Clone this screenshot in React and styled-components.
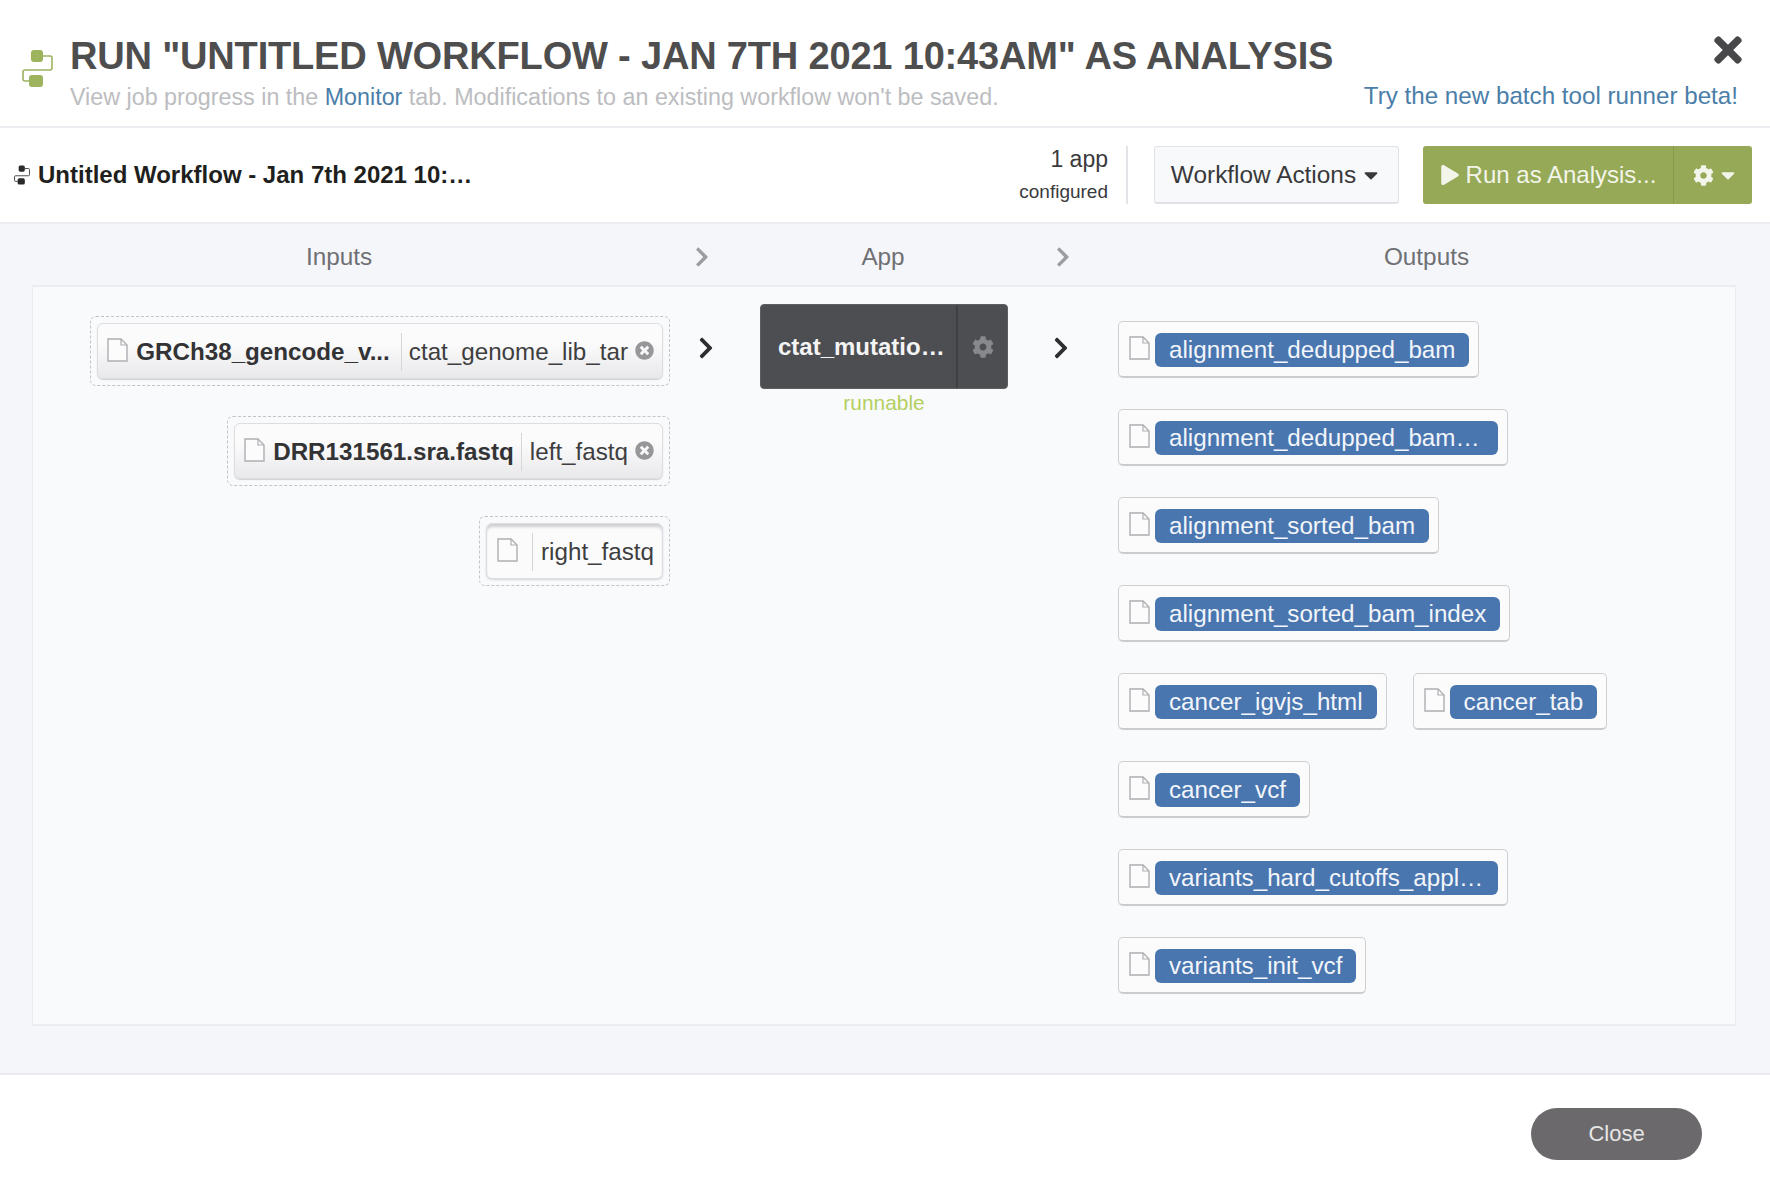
import React from 'react';
import styled, { createGlobalStyle } from 'styled-components';
import { FaCaretDown, FaChevronRight, FaCog, FaPlay, FaTimes, FaTimesCircle } from 'react-icons/fa';

const GlobalStyle = createGlobalStyle`
    html, body {
        margin: 0;
        padding: 0;
        background: #fff;
    }
    * {
        box-sizing: border-box;
    }
    body {
        font-family: "Liberation Sans", Arial, sans-serif;
    }
`;

const COLUMNS = '637px 90px 248px 110px 1fr';

const Styled = {
    Page: styled.div`
        width: 1770px;
        height: 1188px;
        display: flex;
        flex-direction: column;
        overflow: hidden;
        background: #fff;
    `,
    Header: styled.header`
        height: 128px;
        flex: none;
        display: flex;
        padding: 0 22px 0 22px;
        border-bottom: 2px solid #ecedf0;
    `,
    LogoWrap: styled.div`
        width: 48px;
        padding-top: 50px;
        flex: none;
    `,
    HeaderText: styled.div`
        flex: 1;
        padding-top: 36px;
    `,
    Title: styled.h1`
        margin: 0;
        font-size: 38.05px;
        line-height: 40px;
        font-weight: 700;
        color: #4e4e4f;
        letter-spacing: -0.2px;
        white-space: nowrap;
    `,
    Subtitle: styled.p`
        margin: 8px 0 0;
        font-size: 23.3px;
        line-height: 26px;
        color: #bcbdc0;
        white-space: nowrap;
    `,
    Link: styled.a`
        color: #4a7ea8;
        text-decoration: none;
    `,
    HeaderSide: styled.div`
        display: flex;
        flex-direction: column;
        align-items: flex-end;
        justify-content: space-between;
        padding: 30px 0 17px;
        color: #48484a;
        font-size: 40px;
        line-height: 0;
    `,
    BetaLink: styled.a`
        margin-right: 10px;
        color: #4a7ea8;
        font-size: 24.2px;
        line-height: 26px;
        text-decoration: none;
        white-space: nowrap;
    `,
    Toolbar: styled.div`
        height: 96px;
        flex: none;
        display: flex;
        align-items: center;
        padding: 0 18px 0 14px;
        border-bottom: 2px solid #ecedf0;
    `,
    WorkflowName: styled.div`
        flex: 1;
        display: flex;
        align-items: center;
        gap: 8px;
        font-size: 24px;
        font-weight: 700;
        color: #1f1f20;
    `,
    AppCount: styled.div`
        text-align: right;
        color: #3a3a3c;
        padding-right: 18px;
        border-right: 2px solid #e3e4e7;
        height: 58px;
        margin-right: 26px;
    `,
    CountLine: styled.div`
        font-size: ${p => p.$small ? '19px' : '23px'};
        line-height: ${p => p.$small ? '22px' : '26px'};
        margin-top: ${p => p.$small ? '9px' : '0'};
    `,
    ActionsButton: styled.button`
        width: 245px;
        height: 58px;
        display: flex;
        align-items: center;
        justify-content: center;
        gap: 4px;
        padding: 0;
        font: 24.4px "Liberation Sans", Arial, sans-serif;
        color: #39393b;
        background: #f8f9fb;
        border: 1px solid #e1e2e6;
        border-bottom-width: 2px;
        border-radius: 3px;
    `,
    RunGroup: styled.div`
        display: flex;
        margin-left: 24px;
        height: 58px;
        background: #95a957;
        border-radius: 3px;
        color: #f3f5ea;
    `,
    RunButton: styled.div`
        width: 251px;
        display: flex;
        align-items: center;
        justify-content: center;
        gap: 6px;
        font-size: 24px;
        border-right: 1px solid #87994d;
        white-space: nowrap;
    `,
    RunMenu: styled.div`
        width: 78px;
        display: flex;
        align-items: center;
        justify-content: center;
        gap: 3px;
        padding-left: 6px;
        font-size: 21px;
    `,
    Body: styled.main`
        height: 851px;
        flex: none;
        display: flex;
        flex-direction: column;
        padding: 0 34px 0 32px;
        background: #f5f6fa;
        border-bottom: 2px solid #e9eaed;
    `,
    ColumnHeads: styled.div`
        height: 61px;
        flex: none;
        display: grid;
        grid-template-columns: ${COLUMNS};
        align-items: center;
        font-size: 24.3px;
        color: #6f7073;
    `,
    ColumnHead: styled.div`
        text-align: center;
        padding-right: ${p => p.$inset || 0}px;
        margin-top: 5px;
    `,
    HeadChevron: styled.div`
        display: flex;
        margin-top: 5px;
        padding-left: ${p => p.$offset}px;
        color: #9c9da0;
        font-size: 22px;
    `,
    Panel: styled.section`
        height: 741px;
        display: grid;
        grid-template-columns: ${COLUMNS};
        align-items: start;
        background: #f9fafc;
        border: 2px solid #ebecef;
        border-left-width: 1px;
        border-right-width: 1px;
    `,
    Inputs: styled.div`
        display: flex;
        flex-direction: column;
        align-items: flex-end;
        gap: 30px;
        padding-top: 29px;
    `,
    DropZone: styled.div`
        height: 70px;
        padding: 6px;
        border: 1px dashed #c3c4c8;
        border-radius: 6px;
    `,
    InputTile: styled.div`
        height: 100%;
        display: flex;
        align-items: center;
        padding: 2px 8px 0 ${p => p.$empty ? '10px' : '9px'};
        font-size: 24.2px;
        color: #3e3e40;
        border: 1px solid #dcdde0;
        border-radius: 6px;
        background: ${p => p.$empty ? '#fbfbfc' : 'linear-gradient(#fbfbfc 35%, #e9e9eb)'};
        box-shadow: ${p => p.$empty ? 'inset 0 4px 3px -1px #cfcfd2, 0 1px 2px #d6d6d9' : '0 1px 1px #d0d0d3'};
    `,
    InputName: styled.span`
        font-weight: 700;
        margin-left: 8px;
        color: #333335;
        white-space: nowrap;
    `,
    InputLabel: styled.span`
        display: flex;
        align-items: center;
        height: 38px;
        margin-left: ${p => p.$gap}px;
        padding-left: ${p => p.$pad}px;
        border-left: 1px solid #d6d6d9;
        white-space: nowrap;
    `,
    RemoveIcon: styled.span`
        display: flex;
        margin: -4px 0 0 7px;
        color: #97979a;
        font-size: 19px;
    `,
    ArrowCell: styled.div`
        display: flex;
        padding: 49px 0 0 ${p => p.$offset}px;
        color: #2e2e30;
        font-size: 24px;
    `,
    AppCell: styled.div`
        padding-top: 17px;
        text-align: center;
    `,
    AppCard: styled.div`
        height: 85px;
        display: flex;
        background: #4d4e52;
        border: 1px solid #5d5e62;
        border-radius: 4px;
        color: #f4f4f4;
    `,
    AppName: styled.div`
        flex: 1;
        display: flex;
        align-items: center;
        padding-left: 17px;
        font-size: 24px;
        font-weight: 700;
        white-space: nowrap;
        border-right: 2px solid #3f4043;
    `,
    AppGear: styled.div`
        width: 49px;
        display: flex;
        align-items: center;
        justify-content: center;
        color: #88898c;
        font-size: 22px;
    `,
    AppStatus: styled.div`
        margin-top: 1px;
        font-size: 20.9px;
        line-height: 26px;
        color: #b3d05f;
    `,
    Outputs: styled.div`
        display: flex;
        flex-direction: column;
        gap: 31px;
        padding-top: 34px;
    `,
    OutputRow: styled.div`
        display: flex;
        gap: 26px;
    `,
    OutputTile: styled.div`
        height: 57px;
        width: ${p => p.$truncated ? '390px' : 'auto'};
        display: flex;
        align-items: center;
        gap: 5px;
        padding: 2px 9px 0 10px;
        background: #fbfbfc;
        border: 1px solid #cfd0d3;
        border-bottom: 2px solid #cbccce;
        border-radius: 5px;
    `,
    Pill: styled.span`
        flex: 1;
        height: 34px;
        display: flex;
        align-items: center;
        padding: 0 14px;
        font-size: 24.2px;
        color: #f2f5f9;
        background: #4a76b0;
        border-radius: 6px;
        white-space: nowrap;
    `,
    Footer: styled.footer`
        flex: 1;
        display: flex;
        justify-content: flex-end;
        padding: 33px 68px 0 0;
    `,
    CloseButton: styled.button`
        width: 171px;
        height: 52px;
        padding: 0;
        font: 22px "Liberation Sans", Arial, sans-serif;
        color: #e6e6e6;
        background: #6b696b;
        border: 0;
        border-radius: 26px;
    `,
};

const WorkflowIcon = ({ width, height, fill }) => (
    <svg width={width} height={height} viewBox="0 0 31 37" fill="none" style={{ display: 'block' }}>
        <rect x="9" y="0" width="12" height="12" rx="3" fill={fill} />
        <rect x="7" y="25" width="14" height="12" rx="3" fill={fill} />
        <path d="M21 6 H28 a2 2 0 0 1 2 2 V18 a2 2 0 0 1 -2 2 H3 a2 2 0 0 0 -2 2 V29 a2 2 0 0 0 2 2 H7" stroke={fill} strokeWidth="1.6" />
    </svg>
);

const FileIcon = () => (
    <svg width="21" height="24" viewBox="0 0 21 24" fill="none" style={{ flex: 'none', display: 'block', marginTop: '-5px' }}>
        <path d="M1 1 H14 L20 7 V23 H1 Z" stroke="#adaeb1" strokeWidth="1.4" fill="#fcfcfd" />
        <path d="M14 1 V7 H20" stroke="#adaeb1" strokeWidth="1.2" />
    </svg>
);

const inputs = [
    { name: 'GRCh38_gencode_v...', label: 'ctat_genome_lib_tar', gap: 11, pad: 7 },
    { name: 'DRR131561.sra.fastq', label: 'left_fastq', gap: 7, pad: 8 },
    { label: 'right_fastq', gap: 14, pad: 8 },
];

const outputs = [
    ['alignment_dedupped_bam'],
    ['alignment_dedupped_bam…'],
    ['alignment_sorted_bam'],
    ['alignment_sorted_bam_index'],
    ['cancer_igvjs_html', 'cancer_tab'],
    ['cancer_vcf'],
    ['variants_hard_cutoffs_appl…'],
    ['variants_init_vcf'],
];

export default function App() {
    return (
        <Styled.Page>
            <GlobalStyle />

            <Styled.Header>
                <Styled.LogoWrap>
                    <WorkflowIcon width={31} height={37} fill="#9db35d" />
                </Styled.LogoWrap>
                <Styled.HeaderText>
                    <Styled.Title>RUN "UNTITLED WORKFLOW - JAN 7TH 2021 10:43AM" AS ANALYSIS</Styled.Title>
                    <Styled.Subtitle>
                        View job progress in the <Styled.Link>Monitor</Styled.Link> tab. Modifications to an existing workflow won't be saved.
                    </Styled.Subtitle>
                </Styled.HeaderText>
                <Styled.HeaderSide>
                    <FaTimes />
                    <Styled.BetaLink>Try the new batch tool runner beta!</Styled.BetaLink>
                </Styled.HeaderSide>
            </Styled.Header>

            <Styled.Toolbar>
                <Styled.WorkflowName>
                    <WorkflowIcon width={16} height={20} fill="#2a2a2c" />
                    Untitled Workflow - Jan 7th 2021 10:…
                </Styled.WorkflowName>
                <Styled.AppCount>
                    <Styled.CountLine>1 app</Styled.CountLine>
                    <Styled.CountLine $small>configured</Styled.CountLine>
                </Styled.AppCount>
                <Styled.ActionsButton>
                    Workflow Actions <FaCaretDown size={22} />
                </Styled.ActionsButton>
                <Styled.RunGroup>
                    <Styled.RunButton>
                        <FaPlay size={20} /> Run as Analysis...
                    </Styled.RunButton>
                    <Styled.RunMenu>
                        <FaCog />
                        <FaCaretDown size={22} />
                    </Styled.RunMenu>
                </Styled.RunGroup>
            </Styled.Toolbar>

            <Styled.Body>
                <Styled.ColumnHeads>
                    <Styled.ColumnHead $inset={23}>Inputs</Styled.ColumnHead>
                    <Styled.HeadChevron $offset={22}><FaChevronRight /></Styled.HeadChevron>
                    <Styled.ColumnHead>App</Styled.ColumnHead>
                    <Styled.HeadChevron $offset={45}><FaChevronRight /></Styled.HeadChevron>
                    <Styled.ColumnHead>Outputs</Styled.ColumnHead>
                </Styled.ColumnHeads>

                <Styled.Panel>
                    <Styled.Inputs>
                        {inputs.map((input) => (
                            <Styled.DropZone key={input.label}>
                                <Styled.InputTile $empty={!input.name}>
                                    <FileIcon />
                                    {input.name && <Styled.InputName>{input.name}</Styled.InputName>}
                                    <Styled.InputLabel $gap={input.gap} $pad={input.pad}>{input.label}</Styled.InputLabel>
                                    {input.name && <Styled.RemoveIcon><FaTimesCircle /></Styled.RemoveIcon>}
                                </Styled.InputTile>
                            </Styled.DropZone>
                        ))}
                    </Styled.Inputs>

                    <Styled.ArrowCell $offset={24}><FaChevronRight /></Styled.ArrowCell>

                    <Styled.AppCell>
                        <Styled.AppCard>
                            <Styled.AppName>ctat_mutatio…</Styled.AppName>
                            <Styled.AppGear><FaCog /></Styled.AppGear>
                        </Styled.AppCard>
                        <Styled.AppStatus>runnable</Styled.AppStatus>
                    </Styled.AppCell>

                    <Styled.ArrowCell $offset={41}><FaChevronRight /></Styled.ArrowCell>

                    <Styled.Outputs>
                        {outputs.map((row) => (
                            <Styled.OutputRow key={row[0]}>
                                {row.map((name) => (
                                    <Styled.OutputTile key={name} $truncated={name.endsWith('…')}>
                                        <FileIcon />
                                        <Styled.Pill>{name}</Styled.Pill>
                                    </Styled.OutputTile>
                                ))}
                            </Styled.OutputRow>
                        ))}
                    </Styled.Outputs>
                </Styled.Panel>
            </Styled.Body>

            <Styled.Footer>
                <Styled.CloseButton>Close</Styled.CloseButton>
            </Styled.Footer>
        </Styled.Page>
    );
}
